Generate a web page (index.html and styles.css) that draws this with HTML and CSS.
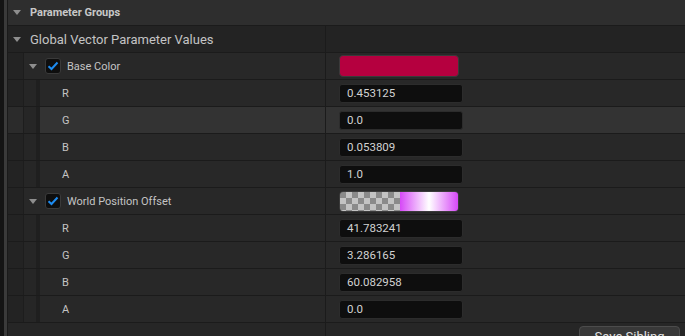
FILE: index.html
```html
<!DOCTYPE html>
<html lang="en">
<head>
  <meta charset="UTF-8">
  <title>Parameter Groups</title>
  <link rel="stylesheet" href="styles.css">
</head>
<body>
  <div class="frame">
    <div class="edge"></div>
    <div class="edge-line"></div>
    <div class="panel">

      <div class="group-head">
        <span class="arrow"></span>
        <span class="group-title">Parameter Groups</span>
      </div>

      <div class="row category">
        <div class="name">
          <span class="arrow"></span>
          <span class="cat-title">Global Vector Parameter Values</span>
        </div>
        <div class="value"></div>
      </div>

      <!-- Base Color -->
      <div class="row param">
        <div class="name">
          <div class="well"></div>
          <div class="param-label">
            <span class="arrow"></span>
            <span class="check">
              <svg width="12" height="10" viewBox="0 0 12 10"><polyline points="1.5,5.2 4.5,8 10.5,1.5" fill="none" stroke="#1d8bf0" stroke-width="2"/></svg>
            </span>
            <span class="label">Base Color</span>
          </div>
        </div>
        <div class="value">
          <div class="swatch base"></div>
        </div>
      </div>

      <div class="row child">
        <div class="name"><div class="well"></div><div class="well2"></div><div class="well3"></div><div class="child-label">R</div></div>
        <div class="value"><div class="num">0.453125</div></div>
      </div>
      <div class="row child hover">
        <div class="name"><div class="well"></div><div class="well2"></div><div class="well3"></div><div class="child-label">G</div></div>
        <div class="value"><div class="num">0.0</div></div>
      </div>
      <div class="row child">
        <div class="name"><div class="well"></div><div class="well2"></div><div class="well3"></div><div class="child-label">B</div></div>
        <div class="value"><div class="num">0.053809</div></div>
      </div>
      <div class="row child">
        <div class="name"><div class="well"></div><div class="well2"></div><div class="well3"></div><div class="child-label">A</div></div>
        <div class="value"><div class="num">1.0</div></div>
      </div>

      <!-- World Position Offset -->
      <div class="row param">
        <div class="name">
          <div class="well"></div>
          <div class="param-label">
            <span class="arrow"></span>
            <span class="check">
              <svg width="12" height="10" viewBox="0 0 12 10"><polyline points="1.5,5.2 4.5,8 10.5,1.5" fill="none" stroke="#1d8bf0" stroke-width="2"/></svg>
            </span>
            <span class="label">World Position Offset</span>
          </div>
        </div>
        <div class="value">
          <div class="swatch wpo">
            <div class="checker"></div>
            <div class="tint"></div>
          </div>
        </div>
      </div>

      <div class="row child">
        <div class="name"><div class="well"></div><div class="well2"></div><div class="well3"></div><div class="child-label">R</div></div>
        <div class="value"><div class="num">41.783241</div></div>
      </div>
      <div class="row child">
        <div class="name"><div class="well"></div><div class="well2"></div><div class="well3"></div><div class="child-label">G</div></div>
        <div class="value"><div class="num">3.286165</div></div>
      </div>
      <div class="row child">
        <div class="name"><div class="well"></div><div class="well2"></div><div class="well3"></div><div class="child-label">B</div></div>
        <div class="value"><div class="num">60.082958</div></div>
      </div>
      <div class="row child">
        <div class="name"><div class="well"></div><div class="well2"></div><div class="well3"></div><div class="child-label">A</div></div>
        <div class="value"><div class="num">0.0</div></div>
      </div>

      <div class="row footer">
        <div class="name"></div>
        <div class="value">
          <button class="save">Save Sibling</button>
        </div>
      </div>

    </div>
  </div>
</body>
</html>
```

FILE: styles.css
```css
body {
  margin: 0;
  background: #151515;
  font-family: Roboto, "Liberation Sans", sans-serif;
  color: #c4c4c4;
  overflow: hidden;
}

.frame {
  display: flex;
  width: 685px;
  height: 336px;
}

.edge {
  width: 4px;
  background: #141414;
}

.edge-line {
  width: 3px;
  background: #3a3a3a;
}

.panel {
  flex: 1;
  border-left: 1px solid #1a1a1a;
  background: #262626;
}

.arrow {
  width: 0;
  height: 0;
  border-left: 4px solid transparent;
  border-right: 4px solid transparent;
  border-top: 5px solid #8e8e8e;
}

/* top header */
.group-head {
  height: 25px;
  display: flex;
  align-items: center;
  padding-left: 5px;
  gap: 9px;
  background: #2e2e2e;
  border-bottom: 1px solid #1b1b1b;
}

.group-title {
  font-size: 11px;
  font-weight: bold;
  color: #c8c8c8;
}

/* generic rows */
.row {
  display: flex;
  height: 26px;
  border-bottom: 1px solid #1b1b1b;
  background: #282828;
}

.row .name {
  width: 317px;
  display: flex;
  align-items: stretch;
  border-right: 1px solid #1b1b1b;
}

.row .value {
  flex: 1;
  display: flex;
  align-items: center;
  padding-left: 13px;
}

.category {
  background: #232323;
}

.category .name {
  align-items: center;
  padding-left: 5px;
  gap: 9px;
  width: 312px;
}

.cat-title {
  font-size: 13px;
  color: #c4c4c4;
}

.well {
  width: 15px;
  background: #232323;
  border-right: 1px solid #1d1d1d;
}

.well2 {
  width: 12px;
  background: #262626;
}

.well3 {
  width: 4px;
  background: #1f1f1f;
}

.param-label {
  flex: 1;
  display: flex;
  align-items: center;
  padding-left: 5px;
}

.param-label .check {
  margin-left: 8px;
  width: 14px;
  height: 14px;
  border: 1px solid #3a3a3a;
  border-radius: 3px;
  background: #0e0e0e;
  display: flex;
  align-items: center;
  justify-content: center;
}

.label {
  margin-left: 6px;
  font-size: 11px;
}

.child-label {
  flex: 1;
  display: flex;
  align-items: center;
  padding-left: 22px;
  font-size: 11px;
}

.hover {
  background: #333333;
}

.hover .well {
  background: #2b2b2b;
}

.num {
  width: 115px;
  height: 17px;
  padding-left: 7px;
  line-height: 17px;
  background: #0e0e0e;
  border: 1px solid #2c2c2c;
  border-radius: 3px;
  font-size: 11.5px;
  color: #d2d2d2;
}

.swatch {
  width: 118px;
  height: 20px;
  border: 1px solid #3a3a3a;
  border-radius: 4px;
  overflow: hidden;
}

.swatch.base {
  background: #b5003f;
}

.swatch.wpo {
  display: flex;
  height: 19px;
}

.checker {
  width: 60px;
  background: repeating-conic-gradient(#c3c3c3 0 25%, #8a8a8a 0 50%);
  background-size: 12px 12px;
}

.tint {
  flex: 1;
  background: linear-gradient(to right, #d648f7, #ffffff 50%, #d648f7);
}

.footer {
  border-bottom: none;
  background: #262626;
}

.footer .value {
  align-items: flex-start;
  justify-content: flex-end;
  padding-top: 3px;
  padding-right: 5px;
}

.save {
  width: 101px;
  height: 26px;
  padding: 0;
  padding-bottom: 6px;
  background: #383838;
  border: 1px solid #4c4c4c;
  border-radius: 4px;
  font-family: Roboto, "Liberation Sans", sans-serif;
  font-size: 13px;
  color: #e2e2e2;
}
```
